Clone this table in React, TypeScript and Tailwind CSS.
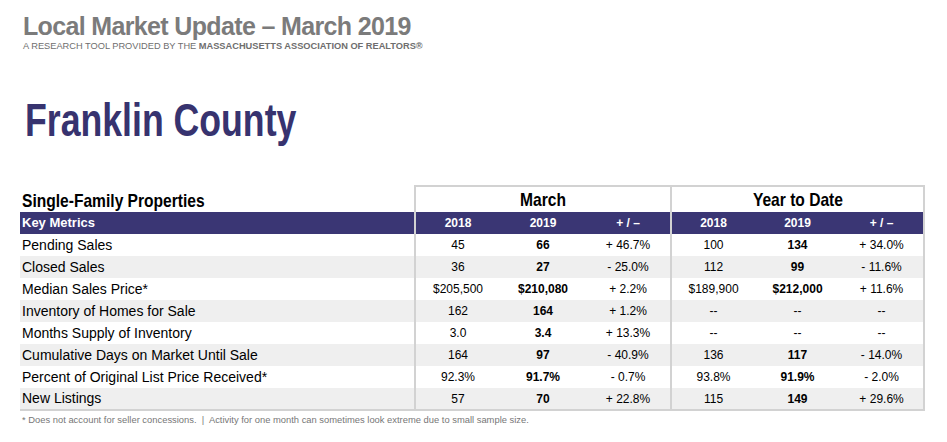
const sans = { fontFamily: '"Liberation Sans", Arial, sans-serif' };

const rows = [
  { label: "Pending Sales", m: ["45", "66", "+ 46.7%"], y: ["100", "134", "+ 34.0%"] },
  { label: "Closed Sales", m: ["36", "27", "- 25.0%"], y: ["112", "99", "- 11.6%"] },
  { label: "Median Sales Price*", m: ["$205,500", "$210,080", "+ 2.2%"], y: ["$189,900", "$212,000", "+ 11.6%"] },
  { label: "Inventory of Homes for Sale", m: ["162", "164", "+ 1.2%"], y: ["--", "--", "--"] },
  { label: "Months Supply of Inventory", m: ["3.0", "3.4", "+ 13.3%"], y: ["--", "--", "--"] },
  { label: "Cumulative Days on Market Until Sale", m: ["164", "97", "- 40.9%"], y: ["136", "117", "- 14.0%"] },
  { label: "Percent of Original List Price Received*", m: ["92.3%", "91.7%", "- 0.7%"], y: ["93.8%", "91.9%", "- 2.0%"] },
  { label: "New Listings", m: ["57", "70", "+ 22.8%"], y: ["115", "149", "+ 29.6%"] },
];

function Cell({ v, bold, edge }: { v: string; bold?: boolean; edge?: "l" | "r" }) {
  const strong = bold && v !== "--";
  return (
    <td
      className={`text-center text-[12px] ${strong ? "font-bold" : ""} ${edge === "l" ? "border-l-2 border-[#d2d2d2]" : ""} ${edge === "r" ? "border-r-2 border-[#d2d2d2]" : ""}`}
    >
      {v}
    </td>
  );
}

export default function App() {
  return (
    <div className="w-[947px] h-[442px] bg-white overflow-hidden pl-[20px] pt-[12px]" style={sans}>
      <h1 className="pl-[3px] text-[25px] leading-[28px] font-bold text-[#7b7b7b] tracking-[-0.65px] whitespace-nowrap">
        Local Market Update – March 2019
      </h1>
      <p className="pl-[3px] mt-[1px] text-[9.25px] leading-[10px] text-[#6e6e6e] whitespace-nowrap">
        A RESEARCH TOOL PROVIDED BY THE <span className="font-bold">MASSACHUSETTS ASSOCIATION OF REALTORS®</span>
      </p>
      <h2 className="pl-[5px] mt-[46px] text-[46px] leading-[46px] font-bold text-[#37336f] whitespace-nowrap">
        <span className="inline-block origin-left scale-x-[0.775]">Franklin County</span>
      </h2>

      <table className="mt-[42px] w-[904px] table-fixed border-collapse">
        <colgroup>
          <col className="w-[395px]" />
          <col className="w-[85px]" />
          <col className="w-[86px]" />
          <col className="w-[85px]" />
          <col className="w-[84px]" />
          <col className="w-[85px]" />
          <col className="w-[84px]" />
        </colgroup>
        <thead>
          <tr className="h-[26px]">
            <th className="pl-[2px] text-left align-bottom text-[19px] leading-[22px] font-bold text-black whitespace-nowrap">
              <span className="inline-block origin-left scale-x-[0.82]">Single-Family Properties</span>
            </th>
            <th colSpan={3} className="border-2 border-b-0 border-[#d2d2d2] text-[19px] leading-[22px] font-bold text-black">
              <span className="inline-block scale-x-[0.82]">March</span>
            </th>
            <th colSpan={3} className="border-2 border-b-0 border-[#d2d2d2] text-[19px] leading-[22px] font-bold text-black">
              <span className="inline-block scale-x-[0.82]">Year to Date</span>
            </th>
          </tr>
          <tr className="h-[22px] bg-[#3a3674] text-white">
            <th className="pl-[2px] text-left text-[13px] font-bold">Key Metrics</th>
            <th className="border-l-2 border-[#d2d2d2] text-[12px] font-bold">2018</th>
            <th className="text-[12px] font-bold">2019</th>
            <th className="text-[12px] font-bold whitespace-pre">+ / –</th>
            <th className="border-l-2 border-[#d2d2d2] text-[12px] font-bold">2018</th>
            <th className="text-[12px] font-bold">2019</th>
            <th className="border-r-2 border-[#d2d2d2] text-[12px] font-bold whitespace-pre">+ / –</th>
          </tr>
        </thead>
        <tbody>
          {rows.map((r, i) => (
            <tr
              key={r.label}
              className={`h-[22px] ${i % 2 === 1 ? "bg-[#efefef]" : "bg-white"} ${i === rows.length - 1 ? "border-b-2 border-[#d2d2d2]" : ""}`}
            >
              <td className="pl-[2px] text-[14px] text-black whitespace-nowrap">{r.label}</td>
              <Cell v={r.m[0]} edge="l" />
              <Cell v={r.m[1]} bold />
              <Cell v={r.m[2]} />
              <Cell v={r.y[0]} edge="l" />
              <Cell v={r.y[1]} bold />
              <Cell v={r.y[2]} edge="r" />
            </tr>
          ))}
        </tbody>
      </table>
      <p className="pl-[2px] mt-[4px] text-[9.4px] leading-[10px] text-[#777] whitespace-nowrap">
        * Does not account for seller concessions.&nbsp; |&nbsp; Activity for one month can sometimes look extreme due to small sample size.
      </p>
    </div>
  );
}
